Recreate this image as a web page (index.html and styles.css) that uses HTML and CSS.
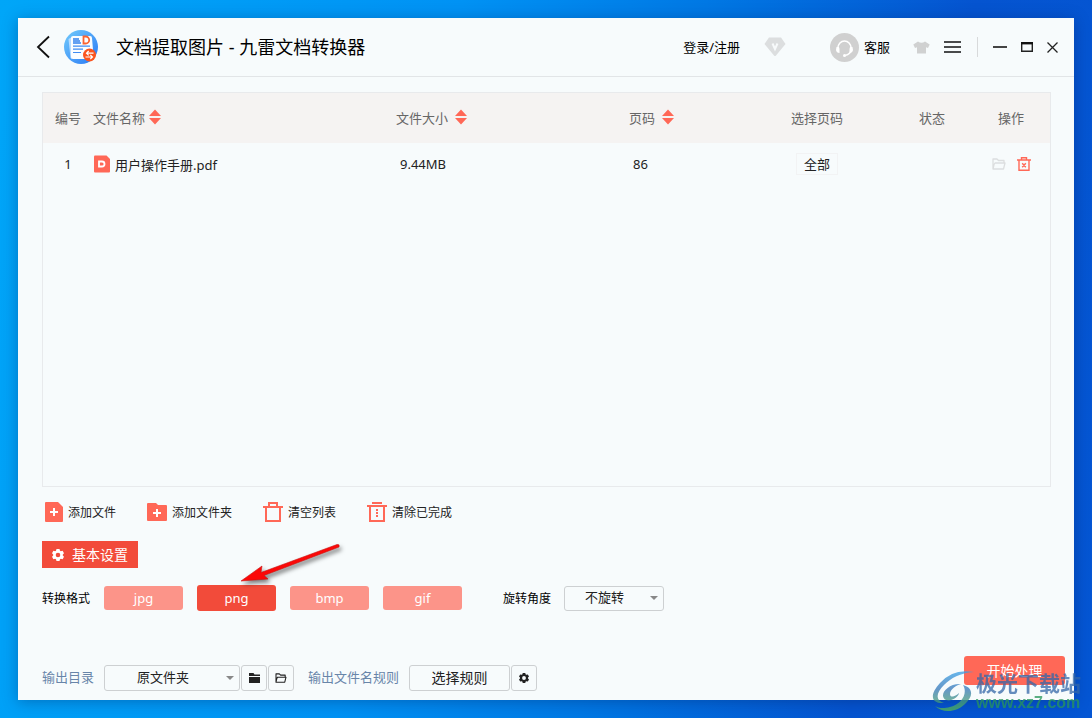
FILE: index.html
```html
<!DOCTYPE html>
<html lang="zh-CN">
<head>
<meta charset="utf-8">
<title>文档提取图片 - 九雷文档转换器</title>
<link rel="stylesheet" href="styles.css">
</head>
<body>
<svg class="symbols" aria-hidden="true">
  <symbol id="sort" viewBox="0 0 12 16"><path d="M6 .5 12 7H0zM0 9h12l-6 6.500z" fill="#ff6857"/></symbol>
  <symbol id="gear" viewBox="0 0 12 12"><path fill-rule="evenodd" fill="currentColor" d="M4.500 0h3l.5 1.700.9.500L10.600 1.700 12 4.300 10.800 5.500v1L12 7.700l-1.400 2.600-1.700-.5-.9.500-.5 1.700h-3L4 10.300l-.9-.5-1.700.5L0 7.700l1.200-1.200v-1L0 4.300l1.400-2.600 1.700.5.900-.5zM6 3.700a2.300 2.300 0 1 0 0 4.600 2.300 2.300 0 0 0 0-4.600z"/></symbol>
  <symbol id="folder-open" viewBox="0 0 14 12"><path fill="none" stroke="currentColor" stroke-width="1.300" stroke-linejoin="round" d="M1 11V1h4l1.500 1.500H12V5M1 11l1-4.500L3 5h10l-1.500 6z"/></symbol>
</svg>
<div class="window">
  <header class="titlebar">
    <button class="icon-btn back" aria-label="返回"><svg width="14" height="24" viewBox="0 0 14 24"><path d="M13 1.500 2 12l11 10.500" fill="none" stroke="#111" stroke-width="1.800"/></svg></button>
    <svg class="logo" width="34" height="34" viewBox="0 0 34 34">
      <defs><linearGradient id="lg" x1="0" y1="0" x2="1" y2="1"><stop offset="0" stop-color="#72cbfb"/><stop offset="1" stop-color="#2878f5"/></linearGradient></defs>
      <circle cx="17" cy="17" r="17" fill="url(#lg)"/>
      <path d="M4.500 9 8 7v22l-1.500-1z" fill="#b7dcff"/>
      <path d="M9 6h17q2 0 2 2l1 12-2 9H9q-2 0-2-2V8q0-2 2-2z" fill="#fafdff"/>
      <path d="M9 9h6M9 11h7M9 13h8" stroke="#3181ee" stroke-width="1.400"/>
      <path d="M9 16.200h17M9 19.200h10M9 22.500h8" stroke="#3f8cf2" stroke-width="1.200"/>
      <path d="M19.500 6.500h2.200a3.500 3.500 0 0 1 0 7h-2.200z" fill="none" stroke="#fb6330" stroke-width="1.800"/>
      <circle cx="25.500" cy="25" r="6.500" fill="#fb551f"/>
      <path d="M29.500 23.200h-7m2.200-2.200-2.200 2.200 2.200 2.200M21.500 27h7m-2.200-2.200 2.200 2.200-2.200 2.200" fill="none" stroke="#fff" stroke-width="1.200"/>
    </svg>
    <h1 class="title">文档提取图片 - 九雷文档转换器</h1>
    <a class="login" href="#">登录/注册</a>
    <svg class="vip" width="22" height="20" viewBox="0 0 22 20"><path d="M5 .5h12l4.500 6.500L12 18.500q-1 1-2 0L.5 7z" fill="#dcdedf"/><path d="m8.500 6.500 2.500 5.500 2.500-5.500" fill="none" stroke="#f7fafb" stroke-width="2"/></svg>
    <a class="service" href="#"><svg width="29" height="29" viewBox="0 0 29 29"><circle cx="14.500" cy="14.500" r="14.500" fill="#d0d0d0"/><path d="M8 16.500V15a6.500 7 0 0 1 13 0v1.500q0 4.500-6 6" fill="none" stroke="#fff" stroke-width="1.500"/><path d="M6.500 14q3-1 3 2v4q-3 0-3.500-3zM22.500 14q-3-1-3 2v4q3 0 3.500-3z" fill="#fff"/><circle cx="14.500" cy="22.500" r="1.500" fill="#fff"/></svg><span class="lift">客服</span></a>
    <button class="icon-btn shirt" aria-label="皮肤"><svg width="17" height="13" viewBox="0 0 17 13"><path d="M5 .5q3.500 2.500 7 0L16.700 3.500 15 7l-2-.8V12.500H4V6.200L2 7 .3 3.500z" fill="#d0d1d1"/></svg></button>
    <button class="icon-btn menu" aria-label="菜单"><svg width="17" height="12" viewBox="0 0 17 12"><path d="M0 1h17M0 6h17M0 11h17" stroke="#111" stroke-width="1.700"/></svg></button>
    <span class="divider"></span>
    <button class="icon-btn" aria-label="最小化"><svg width="14" height="12" viewBox="0 0 14 12"><path d="M0 6h14" stroke="#444" stroke-width="2"/></svg></button>
    <button class="icon-btn" aria-label="最大化"><svg width="12" height="10" viewBox="0 0 12 10"><path d="M.7 1v8.300h10.600V1" fill="none" stroke="#222" stroke-width="1.400"/><path d="M0 1.200h12" stroke="#111" stroke-width="2.400"/></svg></button>
    <button class="icon-btn" aria-label="关闭"><svg width="11" height="11" viewBox="0 0 11 11"><path d="m.5.5 10 10m0-10-10 10" stroke="#222" stroke-width="1.300"/></svg></button>
  </header>

  <main class="content">
    <section class="panel">
      <table class="files">
        <colgroup><col class="c-no"><col><col class="c-size"><col class="c-pages"><col class="c-range"><col class="c-state"><col class="c-ops"></colgroup>
        <thead>
          <tr><th class="mid">编号</th>
          <th><span class="head near">文件名称<svg width="12" height="16"><use href="#sort"/></svg></span></th>
          <th><span class="head">文件大小<svg width="12" height="16"><use href="#sort"/></svg></span></th>
          <th><span class="head">页码<svg width="12" height="16"><use href="#sort"/></svg></span></th>
          <th class="mid">选择页码</th><th class="mid">状态</th><th class="mid">操作</th></tr>
        </thead>
        <tbody>
          <tr><td class="mid">1</td>
          <td><span class="file"><svg width="16" height="18" viewBox="0 0 16 18"><path d="M1 .5h11.500L16 4v12.500q0 1-1 1H1q-1 0-1-1v-15q0-1 1-1z" fill="#ff6857"/><path d="M5 6.500h3a2.500 2.500 0 0 1 0 5H5z" fill="none" stroke="#fff" stroke-width="1.800"/></svg>用户操作手册.pdf</span></td>
          <td class="inset">9.44MB</td><td class="inset">86</td>
          <td class="mid"><button class="range">全部</button></td><td></td>
          <td><span class="ops"><button class="icon-btn faint" aria-label="打开文件夹"><svg width="14" height="12"><use href="#folder-open"/></svg></button><button class="icon-btn" aria-label="删除"><svg width="14" height="14" viewBox="0 0 14 14"><path d="M0 3h14M4.500 3V.7h5V3M2 3v10.200h10V3M5.200 6.200l3.600 4m0-4-3.600 4" fill="none" stroke="#ff6857" stroke-width="1.400"/></svg></button></span></td></tr>
        </tbody>
      </table>
    </section>

    <div class="actions">
      <button class="action"><svg width="18" height="20" viewBox="0 0 18 20"><path d="M1 0h12l5 5v14q0 1-1 1H1q-1 0-1-1V1q0-1 1-1z" fill="#ff6857"/><path d="M5 10h8m-4-4v8" stroke="#fff" stroke-width="2"/></svg>添加文件</button>
      <button class="action"><svg width="20" height="18" viewBox="0 0 20 18"><path d="M1 0h8l2 2h8q1 0 1 1v14q0 1-1 1H1q-1 0-1-1V1q0-1 1-1z" fill="#ff6857"/><path d="M6 10h8m-4-4v8" stroke="#fff" stroke-width="2"/></svg>添加文件夹</button>
      <button class="action"><svg width="20" height="20" viewBox="0 0 20 20"><path d="M0 5h20M6 5V1h8v4M3 5v14h14V5" fill="none" stroke="#ff6857" stroke-width="2"/></svg>清空列表</button>
      <button class="action"><svg width="20" height="20" viewBox="0 0 20 20"><path d="M0 4h20M5 1h10M3 4v15h14V4" fill="none" stroke="#ff6857" stroke-width="2"/><path d="M10 7v8" stroke="#ff6857" stroke-width="2" stroke-dasharray="2 1"/></svg>清除已完成</button>
    </div>

    <h2 class="tab"><svg width="12" height="12"><use href="#gear"/></svg><span class="lift">基本设置</span></h2>

    <div class="settings">
      <span class="label">转换格式</span>
      <div class="formats">
        <button class="format">jpg</button>
        <button class="format active">png
          <svg class="pointer" width="112" height="48" viewBox="0 0 112 48" aria-hidden="true"><path d="M4 41 25 26 24 32.500 100 4.500Q103 4 102 7L27 35.500 31 39z" fill="#fb0808" stroke="#c81410" stroke-width=".6"/></svg></button>
        <button class="format">bmp</button>
        <button class="format">gif</button>
      </div>
      <label class="label" for="rotate">旋转角度</label>
      <span class="dropdown"><select class="select rotate" id="rotate"><option>不旋转</option></select></span>
    </div>

    <footer class="output">
      <label class="out-label" for="dir">输出目录</label>
      <span class="dropdown"><select class="select dir" id="dir"><option>原文件夹</option></select></span>
      <button class="square" aria-label="选择文件夹"><svg width="11" height="10" viewBox="0 0 11 10"><path d="M0 0h4.500l1 1.500H11V3H0zM0 4h11v6H0z" fill="#222"/></svg></button>
      <button class="square" aria-label="打开文件夹"><svg width="12" height="10"><use href="#folder-open"/></svg></button>
      <span class="out-label rule-label">输出文件名规则</span>
      <button class="rule">选择规则</button>
      <button class="square" aria-label="规则设置"><svg width="10" height="10"><use href="#gear"/></svg></button>
      <button class="start">开始处理</button>
    </footer>
  </main>
</div>
<div class="watermark" aria-hidden="true">
  <svg width="44" height="42" viewBox="0 0 44 42"><defs><linearGradient id="wm" x1="0" y1="0" x2="0" y2="1"><stop offset="0" stop-color="#39a0e6"/><stop offset=".45" stop-color="#3476b8"/><stop offset="1" stop-color="#55b94b"/></linearGradient></defs>
  <path fill="url(#wm)" d="M42 2Q21-2 8 13C-3 25-1 34 12 33c-9-3-8-10 0-18C19 8 28 3 42 2zM29 14c-14-1-23 12-15 16 6 2 13-4 13-7-4 4-9 5-9 1 0-5 7-9 11-10zM31 15c5 8-1 19-13 22-7 2-12 1-15-1 8 8 22 6 30-2 8-7 9-16-2-19z"/></svg>
  <div><div class="wm-name">极光下载站</div><div class="wm-url">www.xz7.com</div></div>
</div>
</body>
</html>
```
FILE: styles.css
```css
* { box-sizing: border-box; }

body {
  margin: 0;
  min-height: 100vh;
  padding: 18px;
  display: flex;
  position: relative;
  overflow: hidden;
  background: linear-gradient(100deg, #00a6f8 0%, #0092f4 38%, #0078e4 58%, #0554d0 80%, #0456d4 100%);
  font-family: "Noto Sans", "Noto Sans CJK SC", sans-serif;
  font-size: 13px;
  color: #222;
}

button, select { font: inherit; color: inherit; margin: 0; cursor: pointer; }
button { padding: 0; border: 0; background: none; }
a { color: inherit; text-decoration: none; }
svg { flex: none; display: block; }
.symbols { position: absolute; width: 0; height: 0; }
.lift, .login, .title { padding-bottom: 2px; }

.window {
  flex: 1;
  min-width: 0;
  display: flex;
  flex-direction: column;
  background: #f7fbfc;
  box-shadow: 0 2px 14px rgba(0, 30, 90, .35);
}

.titlebar {
  height: 59px;
  flex: none;
  display: flex;
  align-items: center;
  padding: 0 16px 0 18px;
  border-bottom: 1px solid #e2e5e7;
  color: #000;
}
.icon-btn { display: flex; align-items: center; justify-content: center; }
.titlebar .icon-btn + .icon-btn { margin-left: 14px; }
.titlebar .divider + .icon-btn { margin-left: 0; }
.logo { margin-left: 14px; }
.title { margin: 0 auto 0 18px; font-size: 18px; font-weight: 400; white-space: nowrap; }
.vip { margin: 0 44px 0 24px; }
.service { display: flex; align-items: center; gap: 5px; }
.shirt { margin-left: 23px; }
.divider { width: 1px; height: 20px; margin: 0 15px 0 16px; background: #d8dadb; }

.content {
  flex: 1;
  display: flex;
  flex-direction: column;
  padding: 15px 9px 8px 24px;
}
.panel { flex: 1; margin-right: 14px; border: 1px solid #e8eaec; }

.files { width: 100%; table-layout: fixed; border-collapse: collapse; }
.c-no { width: 50px; }
.c-size { width: 233px; }
.c-pages { width: 113px; }
.c-range { width: 150px; }
.c-state { width: 80px; }
.c-ops { width: 78px; }
.files th {
  height: 50px;
  padding: 0 0 2px;
  background: #f5f3f2;
  color: #666;
  font-weight: 400;
  text-align: left;
}
.files td { height: 44px; padding: 0 0 2px; }
.files .mid { text-align: center; }
.files .inset { padding-left: 4px; }
.head { display: flex; align-items: center; gap: 7px; }
.head.near { gap: 4px; }
.file { display: flex; align-items: center; gap: 5px; padding-left: 1px; }
.range { height: 22px; padding: 0 7px 2px; border: 1px solid #f2f3f4; }
.ops { display: flex; align-items: center; justify-content: center; gap: 11px; }
.faint { color: #dcdedf; }

.actions { display: flex; gap: 31px; height: 26px; margin: 12px 0 0 3px; font-size: 12px; }
.action { display: flex; align-items: center; gap: 5px; }

.tab {
  align-self: flex-start;
  display: flex;
  align-items: center;
  gap: 8px;
  height: 27px;
  margin: 16px 0 0;
  padding: 0 10px;
  background: #f24b3a;
  color: #fff;
  font-size: 14px;
  font-weight: 400;
}

.settings { display: flex; align-items: center; height: 26px; margin-top: 17px; }
.label { font-size: 12px; color: #000; }
.formats { display: flex; align-items: center; gap: 14px; margin: 0 41px 0 14px; }
.format { width: 79px; height: 24px; padding-bottom: 1px; border-radius: 3px; background: #fc9489; color: #fff; }
.format.active { position: relative; background: #f24b3a; height: 26px; }
.pointer { position: absolute; left: 40px; top: -45px; filter: drop-shadow(2px 3px 2px rgba(0, 0, 0, .5)); }

.dropdown { position: relative; display: flex; }
.dropdown::after {
  content: "";
  position: absolute;
  right: 6px;
  top: 50%;
  margin-top: -2px;
  border: 4px solid transparent;
  border-top-color: #888;
  border-bottom: 0;
  pointer-events: none;
}
.select { appearance: none; border: 1px solid #cdd0d2; border-radius: 3px; background: #f7fbfc; }
.rotate { width: 100px; height: 25px; padding: 0 20px 2px; }
.dir { width: 136px; height: 26px; padding: 0 20px 1px 32px; }
.label + .dropdown { margin-left: 13px; }

.output { display: flex; align-items: center; gap: 1px; height: 37px; margin-top: 44px; padding-top: 8px; }
.out-label { margin-right: 9px; padding-bottom: 3px; color: #6885a9; }
.rule-label { margin-left: 13px; }
.square, .rule { height: 26px; border: 1px solid #cdd0d2; border-radius: 3px; }
.square { width: 26px; display: flex; align-items: center; justify-content: center; }
.rule { width: 101px; padding-bottom: 2px; font-size: 14px; }
.start {
  align-self: flex-start;
  width: 101px;
  height: 29px;
  margin: -7px 0 0 auto;
  padding-bottom: 2px;
  border-radius: 3px;
  background: #ff6857;
  color: #fff;
  font-size: 14px;
}

.watermark {
  position: absolute;
  right: 10px;
  bottom: 6px;
  width: 150px;
  display: flex;
  align-items: center;
  opacity: .75;
  pointer-events: none;
  white-space: nowrap;
}
.wm-name { font-size: 21px; line-height: 23px; font-weight: 700; color: #3467a8; }
.wm-url { font: 700 16px/16px "Liberation Sans", sans-serif; color: #28965a; }
```
